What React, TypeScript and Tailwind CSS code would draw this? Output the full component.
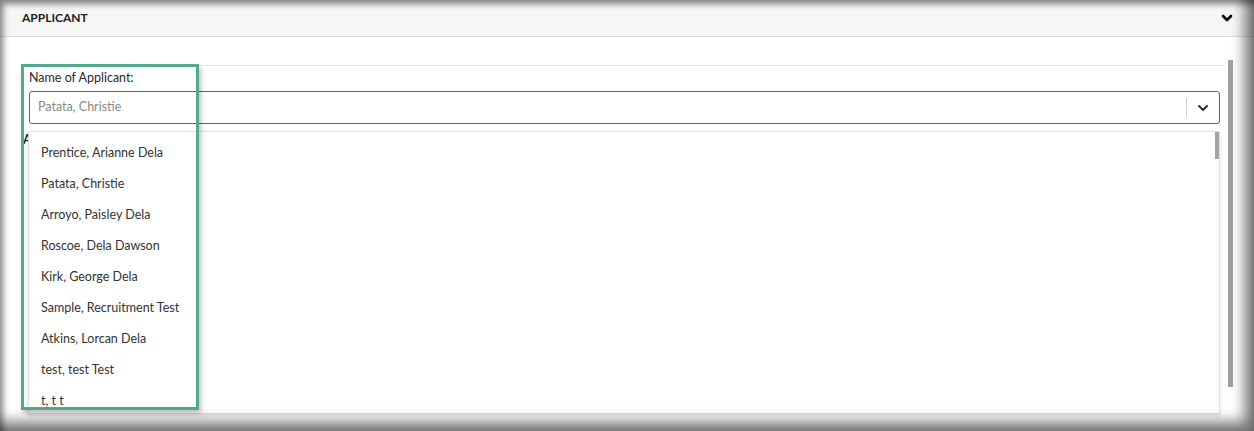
import { ChevronDown } from 'lucide-react';

const applicants = [
  'Prentice, Arianne Dela',
  'Patata, Christie',
  'Arroyo, Paisley Dela',
  'Roscoe, Dela Dawson',
  'Kirk, George Dela',
  'Sample, Recruitment Test',
  'Atkins, Lorcan Dela',
  'test, test Test',
  't, t t',
];

export default function App() {
  return (
    <div className="relative h-[431px] w-[1254px] overflow-hidden bg-white font-['Lato',sans-serif] text-[12.5px] text-[#333]">
      {/* panel header */}
      <div className="flex h-[37px] items-center justify-between border-b border-[#dcdcdc] bg-[#f6f6f6] pl-[22px] pr-[19px]">
        <span className="text-[12px] font-bold text-[#222]">APPLICANT</span>
        <ChevronDown size={16} strokeWidth={4} className="text-black" />
      </div>

      <div className="flex">
        <div className="ml-[22px] mt-[28px] flex-1 border-t border-[#e8e8e8] pl-[7px] pr-[5px] pt-[3px]">
          <label className="block h-[18px] leading-[18px] text-[#2a2a2a]">Name of Applicant:</label>

          <div className="relative mt-[4px]">
            <div className="flex h-[33px] items-center rounded-[3px] border border-[#5c6370] pl-[8px]">
              <span className="flex-1 text-[#8a8a8a]">Patata, Christie</span>
              <span className="h-[19px] w-px bg-[#d0d0d0]" />
              <ChevronDown size={16} strokeWidth={3} className="mx-[8px] text-[#333]" />
            </div>

            {/* next field's label, hidden under the open list */}
            <div className="ml-[-6px] mt-[7px] font-bold text-[#222]">A</div>

            {/* open dropdown */}
            <div className="absolute left-[-1px] right-0 top-[40px] h-[283px] border border-[#e0e0e0] bg-white pt-[6px] shadow-[0_2px_4px_rgba(0,0,0,0.12)]">
              {applicants.map((name) => (
                <div key={name} className="flex h-[31px] items-center pl-[12px] text-[#333]">
                  {name}
                </div>
              ))}
              <div className="absolute right-0 top-0 h-[27px] w-[4px] bg-[#a3a3a3]" />
            </div>
          </div>
        </div>

        {/* page scrollbar */}
        <div className="mr-[21px] mt-[23px] flex h-[354px] w-[8px] flex-col items-end">
          <div className="h-[327px] w-[5px] bg-[#a0a0a0]" />
        </div>
      </div>

      {/* highlight annotation */}
      <div className="pointer-events-none absolute left-[21px] top-[64px] h-[346px] w-[178px] border-[3px] border-[#52ab8c] shadow-[2px_3px_5px_rgba(0,0,0,0.25)]" />

      {/* screenshot frame shadow */}
      <div className="pointer-events-none absolute inset-0 shadow-[inset_3px_4px_6px_rgba(0,0,0,0.45),inset_-9px_-9px_14px_rgba(0,0,0,0.55)]" />
    </div>
  );
}
